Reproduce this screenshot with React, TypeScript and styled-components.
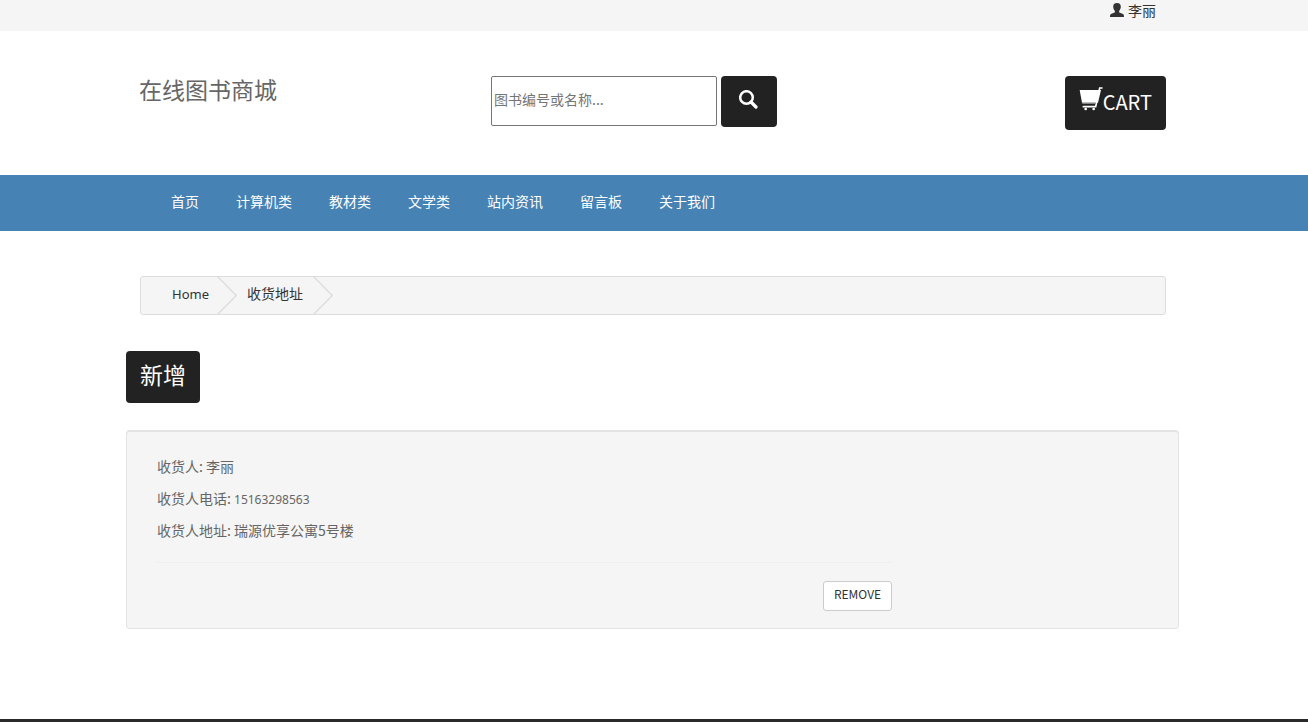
import React from "react";
import styled, { createGlobalStyle } from "styled-components";

const GlobalStyle = createGlobalStyle`
  *, *::before, *::after { box-sizing: border-box; }
  body {
    margin: 0;
    background: #fff;
    color: #666;
    font-family: "Noto Sans CJK SC", "Noto Sans", sans-serif;
    font-size: 14px;
    line-height: 20px;
  }
  a { color: inherit; text-decoration: none; }
  button, input { font: inherit; }
`;

const Page = styled.div`
  display: flex;
  flex-direction: column;
  min-height: 100vh;
`;

const Container = styled.div`
  width: 100%;
  max-width: 1056px;
  margin: 0 auto;
  padding-right: 3px;
`;

const TopBar = styled.div`
  background: #f5f5f5;
  height: 31px;
`;

const UserRow = styled.div`
  display: flex;
  justify-content: flex-end;
  padding-right: 23px;
`;

const UserLink = styled.a`
  display: flex;
  align-items: center;
  gap: 4px;
  color: #333;
`;

const HeaderRow = styled.div`
  display: grid;
  grid-template-columns: 352px 1fr auto;
  align-items: start;
  padding: 45px 13px 45px 13px;
`;

const Logo = styled.a`
  font-size: 23px;
  line-height: 26px;
`;

const SearchForm = styled.form`
  display: flex;
  gap: 4px;
`;

const SearchInput = styled.input`
  width: 226px;
  height: 50px;
  padding: 0 2px 4px;
  border: 1px solid #767676;
  border-radius: 2px;
  background: #fff;
  &::placeholder { color: #757575; opacity: 1; }
`;

const DarkButton = styled.button<{ $height: number; $pad: string }>`
  display: flex;
  align-items: flex-start;
  height: ${(p) => p.$height}px;
  padding: ${(p) => p.$pad};
  border: 0;
  border-radius: 4px;
  background: #222;
  color: #fff;
  font-size: 23px;
  line-height: 28px;
`;

const CartText = styled.span`
  font-size: 20px;
  line-height: 30px;
`;

const Nav = styled.nav`
  background: #4682b4;
`;

const NavList = styled.ul`
  display: flex;
  gap: 37px;
  margin: 0;
  padding: 16px 45px 20px;
  list-style: none;
  color: #fff;
`;

const Breadcrumb = styled.ol`
  display: flex;
  height: 39px;
  margin: 45px 13px 36px 14px;
  padding: 0 31px;
  overflow: hidden;
  border: 1px solid #ddd;
  border-radius: 3px;
  background: #f5f5f5;
  list-style: none;
`;

const Crumb = styled.li<{ $latin?: boolean }>`
  display: flex;
  gap: ${(p) => (p.$latin ? 8 : 10)}px;
  margin-right: 10px;
  color: #333;
  line-height: ${(p) => (p.$latin ? 35 : 33)}px;
  ${(p) => p.$latin && `font-family: "Noto Sans", sans-serif; font-size: 13px;`}
`;

const AddressCard = styled.section`
  margin-top: 27px;
  padding: 24px 0 17px 30px;
  border: 1px solid #e3e3e3;
  border-top-width: 2px;
  border-radius: 4px;
  background: #f5f5f5;
`;

const AddressBody = styled.div`
  width: 72%;
`;

const Line = styled.p`
  margin: 0 0 12px;
`;

const Digits = styled.span`
  font-family: "Noto Sans", sans-serif;
  font-size: 12px;
  line-height: 12px;
`;

const Divider = styled.hr`
  margin: 22px 0 18px;
  border: 0;
  border-top: 1px solid #eee;
`;

const Actions = styled.div`
  display: flex;
  justify-content: flex-end;
`;

const RemoveButton = styled.button`
  height: 30px;
  padding: 0 10px 4px;
  border: 1px solid #ccc;
  border-radius: 3px;
  background: #fff;
  color: #333;
  font-size: 12px;
  line-height: 18px;
`;

const Footer = styled.footer`
  height: 3px;
  margin-top: auto;
  background: #2a2a2a;
`;

const UserIcon = () => (
  <svg width="14" height="14" viewBox="0 0 14 14" fill="currentColor" aria-hidden="true">
    <path d="M7 0C9.6 0 10.9 1.6 10.8 4C10.7 5.8 9.9 7.2 9.1 8V9.3C9.9 10 12.4 10.5 13.4 11.3C13.9 11.9 14 13 14 14H0C0 13 .1 11.9.6 11.3C1.6 10.5 4.1 10 4.9 9.3V8C4.1 7.2 3.3 5.8 3.2 4C3.1 1.6 4.4 0 7 0Z" />
  </svg>
);

const SearchIcon = () => (
  <svg width="19" height="19" viewBox="0 0 19 19" fill="none" stroke="currentColor" aria-hidden="true">
    <circle cx="7.5" cy="7.5" r="6.3" strokeWidth="2.5" />
    <path d="M12 12L17 17" strokeWidth="3.2" strokeLinecap="round" />
  </svg>
);

const CartIcon = () => (
  <svg width="24" height="24" viewBox="0 0 72 72" aria-hidden="true">
    <path d="M2 9H66L57 47H9Z" fill="currentColor" />
    <path d="M69 3H62L50 59H13" fill="none" stroke="currentColor" strokeWidth="5" strokeLinecap="round" />
    <path d="M10 49H50" stroke="#999" strokeWidth="3" />
    <circle cx="20" cy="66" r="4" fill="currentColor" />
    <circle cx="44" cy="66" r="4" fill="currentColor" />
  </svg>
);

const Chevron = () => (
  <svg width="20" height="37" viewBox="0 0 20 37" fill="none" stroke="#ddd" strokeWidth="1.4" aria-hidden="true">
    <path d="M0 -1L19.3 18.5L0 38" />
  </svg>
);

const categories = ["首页", "计算机类", "教材类", "文学类", "站内资讯", "留言板", "关于我们"];

export default function App() {
  return (
    <>
      <GlobalStyle />
      <Page>
        <TopBar>
          <Container>
            <UserRow>
              <UserLink href="#user"><UserIcon />李丽</UserLink>
            </UserRow>
          </Container>
        </TopBar>
        <Container as="header">
          <HeaderRow>
            <Logo href="#home">在线图书商城</Logo>
            <SearchForm onSubmit={(e) => e.preventDefault()}>
              <SearchInput type="text" aria-label="图书编号或名称" placeholder="图书编号或名称..." />
              <DarkButton type="submit" aria-label="搜索" $height={51} $pad="14px 19px 0 18px">
                <SearchIcon />
              </DarkButton>
            </SearchForm>
            <DarkButton type="button" $height={54} $pad="11px 14px 0">
              <CartIcon /><CartText>CART</CartText>
            </DarkButton>
          </HeaderRow>
        </Container>
        <Nav>
          <Container>
            <NavList>
              {categories.map((name) => (
                <li key={name}><a href="#category">{name}</a></li>
              ))}
            </NavList>
          </Container>
        </Nav>
        <Container as="main">
          <Breadcrumb>
            <Crumb $latin><a href="#home">Home</a><Chevron /></Crumb>
            <Crumb><a href="#address">收货地址</a><Chevron /></Crumb>
          </Breadcrumb>
          <DarkButton type="button" $height={52} $pad="9px 14px 0">新增</DarkButton>
          <AddressCard>
            <AddressBody>
              <Line>收货人: 李丽</Line>
              <Line>收货人电话: <Digits>15163298563</Digits></Line>
              <Line>收货人地址: 瑞源优享公寓5号楼</Line>
              <Divider />
              <Actions>
                <RemoveButton type="button">REMOVE</RemoveButton>
              </Actions>
            </AddressBody>
          </AddressCard>
        </Container>
        <Footer />
      </Page>
    </>
  );
}
